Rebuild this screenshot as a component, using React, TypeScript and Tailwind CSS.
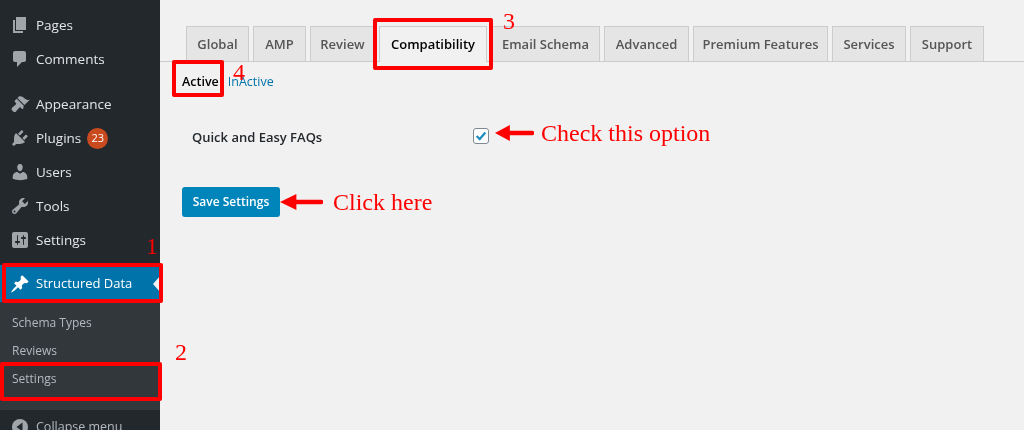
const tabs = [
  { label: "Global", width: "w-[63px]" },
  { label: "AMP", width: "w-[53px]" },
  { label: "Review", width: "w-[65px]" },
  { label: "Compatibility", width: "w-[108px]", active: true },
  { label: "Email Schema", width: "w-[109px]" },
  { label: "Advanced", width: "w-[85px]" },
  { label: "Premium Features", width: "w-[135px]" },
  { label: "Services", width: "w-[74px]" },
  { label: "Support", width: "w-[74px]" },
];

const Icon = ({ d, className = "fill-[#a0a5aa]" }: { d: string; className?: string }) => (
  <svg viewBox="0 0 20 20" className={`w-[20px] h-[20px] ${className}`}>
    <path d={d} />
  </svg>
);

const pagesPath = "M6 15V2h10v13H6zm-1 1h8v2H3V5h2v11z";
const commentsPath = "M5 2h9c1.100 0 2 .9 2 2v7c0 1.100-.9 2-2 2h-2l-5 5v-5H5c-1.100 0-2-.9-2-2V4c0-1.100.9-2 2-2z";
const appearancePath =
  "M14.480 11.060L7.410 3.990l1.500-1.500c.5-.56 2.300-.47 3.510.32 1.210.8 1.430 1.280 2.910 2.100 1.180.64 2.450 1.260 4.450.85zm-.71.71L6.700 4.700 4.930 6.470c-.39.39-.39 1.020 0 1.410l1.060 1.060c.39.39.39 1.030 0 1.420-.6.600-1.430 1.270-2.210 1.910-.08.060-.15.130-.23.190-.66.530-1.220.96-1.360 1.100-.79.790-.79 2.050 0 2.830l1.060 1.060c.78.780 2.050.78 2.830 0 .14-.14.570-.7 1.100-1.360.06-.08.130-.15.190-.23.640-.78 1.310-1.610 1.910-2.210.39-.39 1.030-.39 1.420 0l1.060 1.060c.39.39 1.020.39 1.410 0z";
const pluginsPath =
  "M13.110 4.360L9.870 7.600 8 5.730l3.240-3.240c.35-.34 1.050-.2 1.560.32.520.51.660 1.210.31 1.550zm-8 1.770l.91-1.120 9.010 9.010-1.190.84c-.71.710-2.630 1.160-3.820 1.160H6.140L4.900 17.260c-.59.590-1.540.59-2.120 0-.59-.58-.59-1.530 0-2.120l1.240-1.240v-3.880c0-1.130.4-3.020 1.090-3.890zm7.260 3.970l3.240-3.240c.34-.35 1.040-.21 1.550.31.520.51.660 1.210.31 1.550l-3.240 3.250z";
const usersPath =
  "M10 9.250c-2.270 0-2.730-3.440-2.730-3.440C7 4.020 7.820 2 9.970 2c2.160 0 2.980 2.020 2.710 3.810 0 0-.41 3.440-2.680 3.440zm0 2.570L12.720 10c2.390 0 4.520 2.330 4.520 4.530v2.490s-3.650 1.130-7.240 1.130c-3.650 0-7.240-1.130-7.240-1.130v-2.490c0-2.250 1.940-4.480 4.470-4.480z";
const toolsPath =
  "M16.680 9.770c-1.340 1.340-3.300 1.670-4.950.99l-5.410 6.520c-.99.990-2.590.99-3.570 0-.99-.98-.99-2.580 0-3.570l6.520-5.420c-.68-1.650-.35-3.610.99-4.950 1.280-1.280 3.120-1.620 4.720-1.060l-2.890 2.890 2.820 2.820 2.890-2.890c.56 1.600.22 3.450-1.060 4.720zM3.810 16.210c.4.390 1.030.39 1.420 0 .4-.4.400-1.030 0-1.430-.39-.39-1.020-.39-1.420 0-.39.400-.39 1.030 0 1.430z";
const settingsPath =
  "M18 16V4c0-1.100-.9-2-2-2H4c-1.100 0-2 .9-2 2v12c0 1.100.9 2 2 2h12c1.100 0 2-.9 2-2zM8 11h1c.55 0 1 .45 1 1s-.45 1-1 1H8v1.500c0 .280-.22.5-.5.5s-.5-.22-.5-.5V13H6c-.55 0-1-.45-1-1s.45-1 1-1h1V5.500c0-.280.22-.5.5-.5s.5.220.5.5V11zm5-2h-1c-.55 0-1-.45-1-1s.45-1 1-1h1V5.500c0-.280.22-.5.5-.5s.5.220.5.5V7h1c.55 0 1 .45 1 1s-.45 1-1 1h-1v5.500c0 .280-.22.5-.5.5s-.5-.22-.5-.5V9z";
const pinPath =
  "M10.440 3.020l1.820-1.820 6.360 6.350-1.830 1.820c-1.050-.68-2.480-.57-3.410.36l-.75.75c-.92.93-1.040 2.350-.35 3.410l-1.830 1.820-2.410-2.410-2.800 2.790c-.42.42-3.380 2.710-3.800 2.290s1.860-3.390 2.280-3.810l2.790-2.790L4.100 9.360l1.830-1.820c1.050.69 2.480.57 3.400-.36l.75-.75c.93-.92 1.050-2.350.36-3.410z";

const CollapseIcon = () => (
  <svg viewBox="0 0 20 20" className="w-[20px] h-[20px]">
    <circle cx="10" cy="10" r="8" className="fill-[#a0a5aa]" />
    <path d="M12.500 5.500v9L6.500 10z" className="fill-[#23282d]" />
  </svg>
);

const RedArrow = ({ width }: { width: string }) => (
  <svg viewBox="0 0 42 20" preserveAspectRatio="none" className={`${width} h-[18px] shrink-0`}>
    <path d="M0 10L16 1v6.500h24a2.500 2.500 0 0 1 0 5H16V19z" fill="#ff0000" />
  </svg>
);

const MenuItem = ({ icon, label, badge }: { icon: string; label: string; badge?: string }) => (
  <div className="h-[34px] shrink-0 flex items-center pl-[10px] text-[13.500px] text-[#e4e5e6]">
    <span className="w-[26px] shrink-0">
      <Icon d={icon} />
    </span>
    <span>{label}</span>
    {badge && (
      <span className="ml-[6px] w-[21px] h-[21px] rounded-full bg-[#ca4a1f] text-white text-[11px] flex items-center justify-center">
        {badge}
      </span>
    )}
  </div>
);

const Note = ({ className, children }: { className: string; children: React.ReactNode }) => (
  <span className={`absolute font-['Liberation_Serif',serif] text-[#ff0000] text-[24px] leading-none ${className}`}>
    {children}
  </span>
);

const RedBox = ({ className }: { className: string }) => (
  <div className={`absolute border-[4px] border-[#ff0000] rounded-[2px] ${className}`} />
);

export default function App() {
  return (
    <div className="relative w-[1024px] h-[430px] overflow-hidden flex bg-[#f1f1f1] font-['Open_Sans',sans-serif] blur-[0.3px]">
      <aside className="w-[160px] shrink-0 bg-[#23282d] flex flex-col pt-[8px]">
        <MenuItem icon={pagesPath} label="Pages" />
        <MenuItem icon={commentsPath} label="Comments" />
        <div className="h-[11px] shrink-0" />
        <MenuItem icon={appearancePath} label="Appearance" />
        <MenuItem icon={pluginsPath} label="Plugins" badge="23" />
        <MenuItem icon={usersPath} label="Users" />
        <MenuItem icon={toolsPath} label="Tools" />
        <MenuItem icon={settingsPath} label="Settings" />
        <div className="h-[8px] shrink-0" />
        <div className="relative h-[37px] shrink-0 bg-[#0073aa] flex items-center pl-[10px] text-[13px] text-white">
          <span className="w-[26px] shrink-0">
            <Icon d={pinPath} className="fill-white" />
          </span>
          <span>Structured Data</span>
          <span className="absolute right-0 top-[11px] border-y-[8px] border-y-transparent border-r-[7px] border-r-[#f1f1f1]" />
        </div>
        <div className="bg-[#32373c] h-[108px] shrink-0 pt-[7px] text-[12px] text-[#b4b9be]">
          <div className="h-[28px] pl-[12px] flex items-center">Schema Types</div>
          <div className="h-[28px] pl-[12px] flex items-center">Reviews</div>
          <div className="h-[28px] pl-[12px] flex items-center">Settings</div>
        </div>
        <div className="h-[34px] shrink-0 flex items-center pl-[10px] text-[12.500px] text-[#b4b9be]">
          <span className="w-[26px] shrink-0"><CollapseIcon /></span>
          <span>Collapse menu</span>
        </div>
      </aside>

      <main className="flex-1 flex flex-col pt-[26px]">
        <div className="h-[36px] flex gap-[4px] pl-[26px] border-b border-[#cccccc]">
          {tabs.map((tab) => (
            <div
              key={tab.label}
              className={`${tab.width} shrink-0 border border-b-0 border-[#cccccc] pt-[1px] flex items-center justify-center text-[13px] font-semibold ${
                tab.active ? "h-[36px] bg-[#f1f1f1] text-[#000000]" : "h-[35px] bg-[#e5e5e5] text-[#555555]"
              }`}
            >
              {tab.label}
            </div>
          ))}
        </div>

        <div className="flex gap-[9px] pl-[22px] pt-[10px] text-[12.500px] leading-[20px]">
          <span className="font-semibold text-[#000000]">Active</span>
          <span className="text-[#0073aa]">InActive</span>
        </div>

        <div className="flex items-center h-[36px] mt-[27px] pl-[32px]">
          <span className="w-[281px] pt-[2px] text-[13px] font-semibold text-[#23282d]">Quick and Easy FAQs</span>
          <span className="w-[16px] h-[16px] mb-[2px] rounded-[3px] border border-[#7e8993] bg-white flex items-center justify-center">
            <svg viewBox="0 0 16 16" className="w-[14px] h-[14px]">
              <path d="M3 8l3.500 3.500L13 4" fill="none" stroke="#1e8cbe" strokeWidth="2.500" />
            </svg>
          </span>
          <div className="flex items-center mb-[8px]">
            <span className="ml-[6px]"><RedArrow width="w-[39px]" /></span>
            <span className="ml-[7px] font-['Liberation_Serif',serif] text-[24px] text-[#ff0000]">Check this option</span>
          </div>
        </div>

        <div className="flex items-center mt-[29px] pl-[22px]">
          <button className="w-[98px] h-[30px] rounded-[3px] bg-[#0085ba] text-white text-[12px] font-semibold">
            Save Settings
          </button>
          <RedArrow width="w-[43px]" />
          <span className="ml-[10px] font-['Liberation_Serif',serif] text-[24px] text-[#ff0000]">Click here</span>
        </div>
      </main>

      <RedBox className="left-[2px] top-[263px] w-[161px] h-[40px]" />
      <RedBox className="left-0 top-[362px] w-[162px] h-[39px]" />
      <RedBox className="left-[373px] top-[18px] w-[120px] h-[52px]" />
      <RedBox className="left-[172px] top-[60px] w-[52px] h-[37px]" />
      <Note className="left-[146px] top-[234px]">1</Note>
      <Note className="left-[175px] top-[340px]">2</Note>
      <Note className="left-[503px] top-[9px]">3</Note>
      <Note className="left-[233px] top-[60px]">4</Note>
    </div>
  );
}
